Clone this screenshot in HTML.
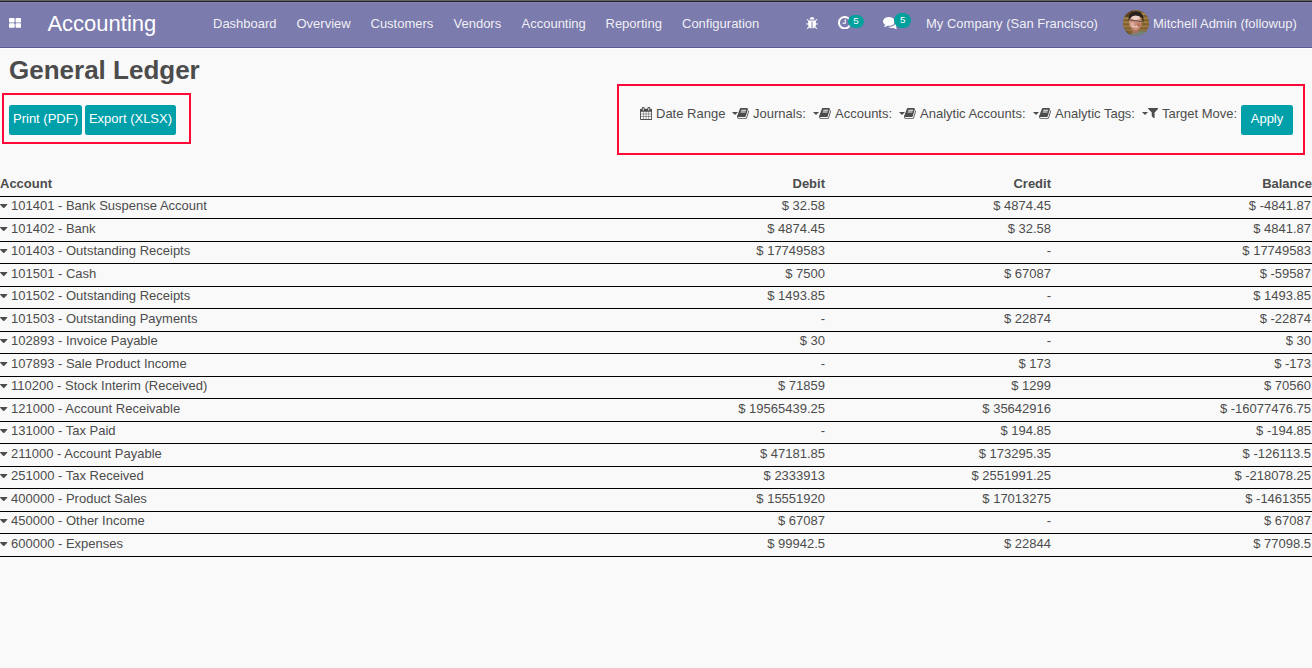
<!DOCTYPE html>
<html><head><meta charset="utf-8"><title>General Ledger</title>
<style>
*{box-sizing:border-box}
html,body{margin:0;padding:0}
body{width:1312px;height:668px;overflow:hidden;background:#f9f9f9;color:#4c4c4c;font-family:"Liberation Sans",sans-serif;font-size:13px;position:relative}
.ic{position:absolute;display:block}
.topline{position:absolute;left:0;top:0;width:1312px;height:2px;background:#222221;border-top:1px solid #636363}
.wl{position:absolute;left:0;top:48px;width:1312px;height:1px;background:#fff}
.nt{position:absolute;left:0;top:0;width:1312px;height:1px;background:#8582b8}
.nl{position:absolute;left:0;top:44px;width:1312px;height:1px;background:#817fb1}
.nav{position:absolute;left:0;top:2px;width:1312px;height:46px;background:#7c7bad;border-bottom:1px solid #5b5a95;color:rgba(255,255,255,.9)}
.nav span{position:absolute;white-space:nowrap;line-height:20px;top:12px}
.nav .brand{font-size:22px;left:47.4px;top:10px;line-height:24px;color:#fff}
.badge{position:absolute;background:#00a09d;color:#fff;font-size:9.75px;text-align:center;border-radius:8px}
.av{position:absolute;left:1123px;top:8px;width:26px;height:26px;border-radius:50%;overflow:hidden}
h1{position:absolute;margin:0;left:9px;top:54px;font-size:26px;line-height:32px;font-weight:bold;color:#4c4c4c;white-space:nowrap}
.box{position:absolute;border:2px solid #ff0838}
.btn{position:absolute;background:#00a0aa;color:#fff;border-radius:2.5px;height:30px;line-height:27px;text-align:center;white-space:nowrap;top:105px}
.flt{position:absolute;top:103px;line-height:21px;white-space:nowrap}
.bcar{position:absolute;top:112px;width:0;height:0;border-left:3.9px solid transparent;border-right:3.9px solid transparent;border-top:3.9px solid #4c4c4c}
.th{position:absolute;top:173px;line-height:21px;font-weight:bold;white-space:nowrap}
.hline{position:absolute;left:0;width:1312px;height:1px;background:#000;top:196px}
.row{position:absolute;left:0;width:1312px;border-bottom:1px solid #000;line-height:18px;white-space:nowrap;box-sizing:content-box}
.row span{position:absolute;top:0}
.row.o span{top:1px}
.row .a{left:11px}
.row .d{right:487px}
.row .c{right:261px}
.row .b{right:1px}
</style></head><body>
<div class="topline"></div><div class="wl"></div>
<div class="nav">
<div class="nt"></div><div class="nl"></div>
<svg class="ic" style="left:9.2px;top:16.2px" width="12.2" height="9.8" viewBox="64 128 1664 1408" preserveAspectRatio="none"><path fill="#fff" d="M832 1024v384q0 52-38 90t-90 38h-512q-52 0-90-38t-38-90v-384q0-52 38-90t90-38h512q52 0 90 38t38 90zm0-768v384q0 52-38 90t-90 38h-512q-52 0-90-38t-38-90v-384q0-52 38-90t90-38h512q52 0 90 38t38 90zm896 768v384q0 52-38 90t-90 38h-512q-52 0-90-38t-38-90v-384q0-52 38-90t90-38h512q52 0 90 38t38 90zm0-768v384q0 52-38 90t-90 38h-512q-52 0-90-38t-38-90v-384q0-52 38-90t90-38h512q52 0 90 38t38 90z"/></svg><svg class="ic" style="left:805.9px;top:14.6px" width="12.1" height="12.2" viewBox="96 64 1600 1568" preserveAspectRatio="none"><path fill="#fff" d="M1696 960q0 26-19 45t-45 19h-224q0 171-67 290l208 209q19 19 19 45t-19 45q-18 19-45 19t-45-19l-198-197q-5 5-15 13t-42 28.500-65 36.500-82 29-97 13v-896h-128v896q-51 0-101.500-13.500t-87-33-66-39-43.500-32.500l-15-14-183 207q-20 21-48 21-24 0-43-16-19-18-20.500-44.500t15.500-46.500l202-227q-58-114-58-274h-224q-26 0-45-19t-19-45 19-45 45-19h224v-294l-173-173q-19-19-19-45t19-45 45-19 45 19l173 173h844l173-173q19-19 45-19t45 19 19 45-19 45l-173 173v294h224q26 0 45 19t19 45zm-480-576h-640q0-133 93.500-226.500t226.500-93.500 226.500 93.500 93.500 226.500z"/></svg><svg class="ic" style="left:837.6px;top:13.6px" width="13.4" height="13.4" viewBox="128 128 1536 1536" preserveAspectRatio="none"><path fill="#fff" d="M1024 544v448q0 14-9 23t-23 9h-320q-14 0-23-9t-9-23v-64q0-14 9-23t23-9h224v-352q0-14 9-23t23-9h64q14 0 23 9t9 23zm416 352q0-148-73-273t-198-198-273-73-273 73-198 198-73 273 73 273 198 198 273 73 273-73 198-198 73-273zm224 0q0 209-103 385.500t-279.500 279.500-385.500 103-385.500-103-279.500-279.500-103-385.500 103-385.500 279.500-279.500 385.500-103 385.500 103 279.500 279.500 103 385.500z"/></svg><svg class="ic" style="left:883.2px;top:14.8px" width="15" height="12.2" viewBox="0 256 1792 1408.1" preserveAspectRatio="none"><path fill="#fff" d="M1408 768q0 139-94 257t-256.500 186.500-353.500 68.500q-86 0-176-16-124 88-278 128-36 9-86 16h-3q-11 0-20.500-8t-11.500-21q-1-3-1-6.500t.5-6.500 2-6l2.500-5 3.500-5.500 4-5 4.500-5 4-4.500q5-6 23-25t26-29.500 22.500-29 25-38.500 20.500-44q-124-72-195-177t-71-224q0-139 94-257t256.500-186.500 353.500-68.500 353.500 68.500 256.500 186.500 94 257zm384 256q0 120-71 224.500t-195 176.500q10 24 20.500 44t25 38.500 22.500 29 26 29.500 23 25q1 1 4 4.500t4.500 5 4 5 3.500 5.500l2.500 5 2 6 .5 6.500-1 6.500q-3 14-13 22t-22 7q-50-7-86-16-154-40-278-128-90 16-176 16-271 0-472-132 58 4 88 4 161 0 309-45t264-129q125-92 192-212t67-254q0-77-23-152 129 71 204 178t75 230z"/></svg>
<span class="brand">Accounting</span>
<span style="left:213px">Dashboard</span>
<span style="left:296.5px">Overview</span>
<span style="left:370.5px">Customers</span>
<span style="left:453.5px">Vendors</span>
<span style="left:521.5px">Accounting</span>
<span style="left:605.5px">Reporting</span>
<span style="left:682px">Configuration</span>
<div class="badge" style="left:848px;top:12.7px;width:16px;height:13.3px;line-height:12.5px">5</div>
<div class="badge" style="left:894.2px;top:10.7px;width:17px;height:15.3px;line-height:14.3px">5</div>
<span style="left:926px">My Company (San Francisco)</span>
<div class="av"><svg width="26" height="26" viewBox="0 0 26 26">
<defs><filter id="bl" x="-20%" y="-20%" width="140%" height="140%"><feGaussianBlur stdDeviation="0.7"/></filter></defs>
<rect width="26" height="26" fill="#80602f"/>
<g filter="url(#bl)">
<rect x="-2" y="-2" width="12" height="9" fill="#5a4526"/>
<rect x="-1" y="7.500" width="28" height="1.600" fill="#a58648"/><rect x="-1" y="11.500" width="28" height="1.600" fill="#a38345"/><rect x="-1" y="15.500" width="28" height="1.600" fill="#a07f42"/><rect x="-1" y="19.300" width="28" height="1.500" fill="#967540"/>
<rect x="18" y="3" width="9" height="2" fill="#a88848"/>
<path d="M-1 27V19q3 1 6 3l3 5z" fill="#5c4232"/>
<path d="M7 27q1-5 6-5.500l8-.3q3 1 3.500 6z" fill="#71837f"/>
<path d="M9.500 19h5.500l.5 3.500q-3 2-6.500 0z" fill="#a9705e"/>
<ellipse cx="12.300" cy="12.300" rx="6.300" ry="8" transform="rotate(-6 12.300 12.300)" fill="#c98f7b"/>
<ellipse cx="12.600" cy="7.600" rx="4.200" ry="2.300" fill="#ecd2c6"/>
<ellipse cx="9.300" cy="14.500" rx="2" ry="2.200" fill="#dcae9c"/>
<ellipse cx="15.800" cy="15" rx="1.800" ry="2" fill="#b9705f"/>
<path d="M5.600 10.500q-.8-8 6.500-9.300 7.800-.5 8.500 7.500l-.4 4.500-1-5q-2.500-2.800-7-2.600-4 .6-5.200 2.900z" fill="#2a221e"/>
<path d="M6.200 10l6 .6 6.800 1.200" stroke="#4a3a38" stroke-width=".8" fill="none"/>
<path d="M9.800 16.200q2.400 1.500 5 .3" stroke="#f3e4df" stroke-width="1" fill="none"/>
</g>
</svg></div>
<span style="left:1153px">Mitchell Admin (followup)</span>
</div>
<h1>General Ledger</h1>
<div class="box" style="left:2px;top:93px;width:189px;height:51px"></div>
<div class="btn" style="left:9px;width:73px">Print (PDF)</div>
<div class="btn" style="left:85px;width:91px">Export (XLSX)</div>
<div class="box" style="left:617px;top:84px;width:688px;height:71px"></div>
<div class="bcar" style="left:732px"></div>
<div class="bcar" style="left:813px"></div>
<div class="bcar" style="left:899px"></div>
<div class="bcar" style="left:1033px"></div>
<div class="bcar" style="left:1142.400px"></div>
<svg class="ic" style="left:640px;top:107px" width="12.1" height="13" viewBox="64 0 1664 1792" preserveAspectRatio="none"><path fill="#4c4c4c" d="M192 1664h288v-288h-288v288zm352 0h320v-288h-320v288zm-352-352h288v-320h-288v320zm352 0h320v-320h-320v320zm-352-384h288v-288h-288v288zm736 736h320v-288h-320v288zm-384-736h320v-288h-320v288zm768 736h288v-288h-288v288zm-384-352h320v-320h-320v320zm-352-864v-288q0-13-9.500-22.500t-22.500-9.500h-64q-13 0-22.500 9.500t-9.500 22.500v288q0 13 9.500 22.500t22.500 9.500h64q13 0 22.500-9.500t9.500-22.500zm736 864h288v-320h-288v320zm-384-384h320v-288h-320v288zm384 0h288v-288h-288v288zm32-480v-288q0-13-9.500-22.500t-22.500-9.500h-64q-13 0-22.500 9.500t-9.500 22.500v288q0 13 9.500 22.500t22.500 9.500h64q13 0 22.500-9.500t9.500-22.500zm384-64v1280q0 52-38 90t-90 38h-1408q-52 0-90-38t-38-90v-1280q0-52 38-90t90-38h128v-96q0-66 47-113t113-47h64q66 0 113 47t47 113v96h384v-96q0-66 47-113t113-47h64q66 0 113 47t47 113v96h128q52 0 90 38t38 90z"/></svg><svg class="ic" style="left:737.2px;top:108px" width="12.1" height="10.8" viewBox="63.48 128 1665.33 1536" preserveAspectRatio="none"><path fill="#4c4c4c" d="M1703 478q40 57 18 129l-275 906q-19 64-76.500 107.500t-122.500 43.500h-923q-77 0-148.500-53.500t-99.500-131.500q-24-67-2-127 0-4 3-27t4-37q1-8-3-21.500t-3-19.500q2-11 8-21t16.500-23.500 16.500-23.500q23-38 45-91.500t30-91.500q3-10 .500-30t-.500-28q3-11 17-28t17-23q21-36 42-92t25-90q1-9-2.500-32t.500-28q4-13 22-30.500t22-22.500q19-26 42.500-84.500t27.500-96.500q1-8-3-25.500t-2-26.500q2-8 9-18t18-23 17-21q8-12 16.500-30.500t15-35 16-36 19.500-32 26.500-23.500 36-11.500 47.500 5.500l-1 3q38-9 51-9h761q74 0 114 56t18 130l-274 906q-36 119-71.500 153.500t-128.500 34.500h-869q-27 0-38 15-11 16-1 43 24 70 144 70h923q29 0 56-15.500t35-41.500l300-987q7-22 5-57 38 15 59 43zm-1064 2q-4 13 2 22.500t20 9.500h608q13 0 25.500-9.500t16.500-22.500l21-64q4-13-2-22.500t-20-9.500h-608q-13 0-25.500 9.500t-16.500 22.500zm-83 256q-4 13 2 22.500t20 9.500h608q13 0 25.500-9.500t16.500-22.500l21-64q4-13-2-22.500t-20-9.500h-608q-13 0-25.500 9.500t-16.500 22.500z"/></svg><svg class="ic" style="left:818.9px;top:108px" width="12.1" height="10.8" viewBox="63.48 128 1665.33 1536" preserveAspectRatio="none"><path fill="#4c4c4c" d="M1703 478q40 57 18 129l-275 906q-19 64-76.500 107.500t-122.500 43.500h-923q-77 0-148.500-53.500t-99.500-131.500q-24-67-2-127 0-4 3-27t4-37q1-8-3-21.500t-3-19.500q2-11 8-21t16.500-23.500 16.500-23.500q23-38 45-91.500t30-91.500q3-10 .500-30t-.500-28q3-11 17-28t17-23q21-36 42-92t25-90q1-9-2.500-32t.500-28q4-13 22-30.500t22-22.500q19-26 42.500-84.500t27.500-96.500q1-8-3-25.500t-2-26.500q2-8 9-18t18-23 17-21q8-12 16.500-30.500t15-35 16-36 19.500-32 26.500-23.500 36-11.500 47.500 5.500l-1 3q38-9 51-9h761q74 0 114 56t18 130l-274 906q-36 119-71.500 153.500t-128.500 34.500h-869q-27 0-38 15-11 16-1 43 24 70 144 70h923q29 0 56-15.500t35-41.500l300-987q7-22 5-57 38 15 59 43zm-1064 2q-4 13 2 22.500t20 9.500h608q13 0 25.500-9.500t16.500-22.500l21-64q4-13-2-22.500t-20-9.500h-608q-13 0-25.500 9.500t-16.500 22.500zm-83 256q-4 13 2 22.500t20 9.500h608q13 0 25.500-9.500t16.500-22.500l21-64q4-13-2-22.500t-20-9.500h-608q-13 0-25.500 9.500t-16.500 22.500z"/></svg><svg class="ic" style="left:904.2px;top:108px" width="12.1" height="10.8" viewBox="63.48 128 1665.33 1536" preserveAspectRatio="none"><path fill="#4c4c4c" d="M1703 478q40 57 18 129l-275 906q-19 64-76.500 107.500t-122.500 43.500h-923q-77 0-148.500-53.500t-99.500-131.500q-24-67-2-127 0-4 3-27t4-37q1-8-3-21.500t-3-19.500q2-11 8-21t16.500-23.500 16.500-23.500q23-38 45-91.500t30-91.500q3-10 .500-30t-.500-28q3-11 17-28t17-23q21-36 42-92t25-90q1-9-2.500-32t.500-28q4-13 22-30.500t22-22.500q19-26 42.500-84.500t27.500-96.500q1-8-3-25.500t-2-26.500q2-8 9-18t18-23 17-21q8-12 16.500-30.500t15-35 16-36 19.500-32 26.500-23.500 36-11.500 47.500 5.500l-1 3q38-9 51-9h761q74 0 114 56t18 130l-274 906q-36 119-71.500 153.500t-128.500 34.500h-869q-27 0-38 15-11 16-1 43 24 70 144 70h923q29 0 56-15.500t35-41.500l300-987q7-22 5-57 38 15 59 43zm-1064 2q-4 13 2 22.500t20 9.500h608q13 0 25.500-9.500t16.500-22.500l21-64q4-13-2-22.500t-20-9.500h-608q-13 0-25.500 9.500t-16.500 22.500zm-83 256q-4 13 2 22.500t20 9.500h608q13 0 25.500-9.500t16.500-22.500l21-64q4-13-2-22.500t-20-9.500h-608q-13 0-25.500 9.500t-16.500 22.500z"/></svg><svg class="ic" style="left:1039.4px;top:108px" width="12.1" height="10.8" viewBox="63.48 128 1665.33 1536" preserveAspectRatio="none"><path fill="#4c4c4c" d="M1703 478q40 57 18 129l-275 906q-19 64-76.500 107.500t-122.500 43.500h-923q-77 0-148.500-53.500t-99.500-131.500q-24-67-2-127 0-4 3-27t4-37q1-8-3-21.500t-3-19.500q2-11 8-21t16.500-23.500 16.500-23.500q23-38 45-91.500t30-91.500q3-10 .500-30t-.500-28q3-11 17-28t17-23q21-36 42-92t25-90q1-9-2.500-32t.500-28q4-13 22-30.500t22-22.500q19-26 42.500-84.500t27.500-96.500q1-8-3-25.500t-2-26.500q2-8 9-18t18-23 17-21q8-12 16.500-30.500t15-35 16-36 19.500-32 26.500-23.500 36-11.500 47.500 5.500l-1 3q38-9 51-9h761q74 0 114 56t18 130l-274 906q-36 119-71.500 153.500t-128.500 34.500h-869q-27 0-38 15-11 16-1 43 24 70 144 70h923q29 0 56-15.500t35-41.500l300-987q7-22 5-57 38 15 59 43zm-1064 2q-4 13 2 22.500t20 9.500h608q13 0 25.500-9.500t16.500-22.500l21-64q4-13-2-22.500t-20-9.500h-608q-13 0-25.500 9.500t-16.500 22.500zm-83 256q-4 13 2 22.500t20 9.500h608q13 0 25.500-9.500t16.500-22.500l21-64q4-13-2-22.500t-20-9.500h-608q-13 0-25.500 9.500t-16.500 22.500z"/></svg><svg class="ic" style="left:1148px;top:108px" width="10.3" height="10.4" viewBox="190.98 256 1410.04 1408" preserveAspectRatio="none"><path fill="#4c4c4c" d="M1595 295q17 41-14 70l-493 493v742q0 42-39 59-13 5-25 5-27 0-45-19l-256-256q-19-19-19-45v-486l-493-493q-31-29-14-70 17-39 59-39h1280q42 0 59 39z"/></svg>
<div class="flt" style="left:656px">Date Range</div>
<div class="flt" style="left:753px">Journals:</div>
<div class="flt" style="left:835px">Accounts:</div>
<div class="flt" style="left:920px">Analytic Accounts:</div>
<div class="flt" style="left:1055px">Analytic Tags:</div>
<div class="flt" style="left:1162px">Target Move:</div>
<div class="btn" style="left:1241px;width:52px">Apply</div>
<div class="th" style="left:0">Account</div>
<div class="th" style="right:487px">Debit</div>
<div class="th" style="right:261px">Credit</div>
<div class="th" style="right:0">Balance</div>
<div class="hline"></div>
<div class="row" style="top:197px;height:21px"><svg class="ic" style="left:0.2px;top:6.8px" width="7.4" height="4.2" viewBox="384 640 1024 576" preserveAspectRatio="none"><path fill="#4c4c4c" d="M1408 704q0 26-19 45l-448 448q-19 19-45 19t-45-19l-448-448q-19-19-19-45t19-45 45-19h896q26 0 45 19t19 45z"/></svg><span class="a">101401 - Bank Suspense Account</span><span class="d">$ 32.58</span><span class="c">$ 4874.45</span><span class="b">$ -4841.87</span></div>
<div class="row o" style="top:219px;height:22px"><svg class="ic" style="left:0.2px;top:7.8px" width="7.4" height="4.2" viewBox="384 640 1024 576" preserveAspectRatio="none"><path fill="#4c4c4c" d="M1408 704q0 26-19 45l-448 448q-19 19-45 19t-45-19l-448-448q-19-19-19-45t19-45 45-19h896q26 0 45 19t19 45z"/></svg><span class="a">101402 - Bank</span><span class="d">$ 4874.45</span><span class="c">$ 32.58</span><span class="b">$ 4841.87</span></div>
<div class="row" style="top:242px;height:21px"><svg class="ic" style="left:0.2px;top:6.8px" width="7.4" height="4.2" viewBox="384 640 1024 576" preserveAspectRatio="none"><path fill="#4c4c4c" d="M1408 704q0 26-19 45l-448 448q-19 19-45 19t-45-19l-448-448q-19-19-19-45t19-45 45-19h896q26 0 45 19t19 45z"/></svg><span class="a">101403 - Outstanding Receipts</span><span class="d">$ 17749583</span><span class="c">-</span><span class="b">$ 17749583</span></div>
<div class="row o" style="top:264px;height:22px"><svg class="ic" style="left:0.2px;top:7.8px" width="7.4" height="4.2" viewBox="384 640 1024 576" preserveAspectRatio="none"><path fill="#4c4c4c" d="M1408 704q0 26-19 45l-448 448q-19 19-45 19t-45-19l-448-448q-19-19-19-45t19-45 45-19h896q26 0 45 19t19 45z"/></svg><span class="a">101501 - Cash</span><span class="d">$ 7500</span><span class="c">$ 67087</span><span class="b">$ -59587</span></div>
<div class="row" style="top:287px;height:21px"><svg class="ic" style="left:0.2px;top:6.8px" width="7.4" height="4.2" viewBox="384 640 1024 576" preserveAspectRatio="none"><path fill="#4c4c4c" d="M1408 704q0 26-19 45l-448 448q-19 19-45 19t-45-19l-448-448q-19-19-19-45t19-45 45-19h896q26 0 45 19t19 45z"/></svg><span class="a">101502 - Outstanding Receipts</span><span class="d">$ 1493.85</span><span class="c">-</span><span class="b">$ 1493.85</span></div>
<div class="row o" style="top:309px;height:22px"><svg class="ic" style="left:0.2px;top:7.8px" width="7.4" height="4.2" viewBox="384 640 1024 576" preserveAspectRatio="none"><path fill="#4c4c4c" d="M1408 704q0 26-19 45l-448 448q-19 19-45 19t-45-19l-448-448q-19-19-19-45t19-45 45-19h896q26 0 45 19t19 45z"/></svg><span class="a">101503 - Outstanding Payments</span><span class="d">-</span><span class="c">$ 22874</span><span class="b">$ -22874</span></div>
<div class="row" style="top:332px;height:21px"><svg class="ic" style="left:0.2px;top:6.8px" width="7.4" height="4.2" viewBox="384 640 1024 576" preserveAspectRatio="none"><path fill="#4c4c4c" d="M1408 704q0 26-19 45l-448 448q-19 19-45 19t-45-19l-448-448q-19-19-19-45t19-45 45-19h896q26 0 45 19t19 45z"/></svg><span class="a">102893 - Invoice Payable</span><span class="d">$ 30</span><span class="c">-</span><span class="b">$ 30</span></div>
<div class="row o" style="top:354px;height:22px"><svg class="ic" style="left:0.2px;top:7.8px" width="7.4" height="4.2" viewBox="384 640 1024 576" preserveAspectRatio="none"><path fill="#4c4c4c" d="M1408 704q0 26-19 45l-448 448q-19 19-45 19t-45-19l-448-448q-19-19-19-45t19-45 45-19h896q26 0 45 19t19 45z"/></svg><span class="a">107893 - Sale Product Income</span><span class="d">-</span><span class="c">$ 173</span><span class="b">$ -173</span></div>
<div class="row" style="top:377px;height:21px"><svg class="ic" style="left:0.2px;top:6.8px" width="7.4" height="4.2" viewBox="384 640 1024 576" preserveAspectRatio="none"><path fill="#4c4c4c" d="M1408 704q0 26-19 45l-448 448q-19 19-45 19t-45-19l-448-448q-19-19-19-45t19-45 45-19h896q26 0 45 19t19 45z"/></svg><span class="a">110200 - Stock Interim (Received)</span><span class="d">$ 71859</span><span class="c">$ 1299</span><span class="b">$ 70560</span></div>
<div class="row o" style="top:399px;height:22px"><svg class="ic" style="left:0.2px;top:7.8px" width="7.4" height="4.2" viewBox="384 640 1024 576" preserveAspectRatio="none"><path fill="#4c4c4c" d="M1408 704q0 26-19 45l-448 448q-19 19-45 19t-45-19l-448-448q-19-19-19-45t19-45 45-19h896q26 0 45 19t19 45z"/></svg><span class="a">121000 - Account Receivable</span><span class="d">$ 19565439.25</span><span class="c">$ 35642916</span><span class="b">$ -16077476.75</span></div>
<div class="row" style="top:422px;height:21px"><svg class="ic" style="left:0.2px;top:6.8px" width="7.4" height="4.2" viewBox="384 640 1024 576" preserveAspectRatio="none"><path fill="#4c4c4c" d="M1408 704q0 26-19 45l-448 448q-19 19-45 19t-45-19l-448-448q-19-19-19-45t19-45 45-19h896q26 0 45 19t19 45z"/></svg><span class="a">131000 - Tax Paid</span><span class="d">-</span><span class="c">$ 194.85</span><span class="b">$ -194.85</span></div>
<div class="row o" style="top:444px;height:22px"><svg class="ic" style="left:0.2px;top:7.8px" width="7.4" height="4.2" viewBox="384 640 1024 576" preserveAspectRatio="none"><path fill="#4c4c4c" d="M1408 704q0 26-19 45l-448 448q-19 19-45 19t-45-19l-448-448q-19-19-19-45t19-45 45-19h896q26 0 45 19t19 45z"/></svg><span class="a">211000 - Account Payable</span><span class="d">$ 47181.85</span><span class="c">$ 173295.35</span><span class="b">$ -126113.5</span></div>
<div class="row" style="top:467px;height:21px"><svg class="ic" style="left:0.2px;top:6.8px" width="7.4" height="4.2" viewBox="384 640 1024 576" preserveAspectRatio="none"><path fill="#4c4c4c" d="M1408 704q0 26-19 45l-448 448q-19 19-45 19t-45-19l-448-448q-19-19-19-45t19-45 45-19h896q26 0 45 19t19 45z"/></svg><span class="a">251000 - Tax Received</span><span class="d">$ 2333913</span><span class="c">$ 2551991.25</span><span class="b">$ -218078.25</span></div>
<div class="row o" style="top:489px;height:22px"><svg class="ic" style="left:0.2px;top:7.8px" width="7.4" height="4.2" viewBox="384 640 1024 576" preserveAspectRatio="none"><path fill="#4c4c4c" d="M1408 704q0 26-19 45l-448 448q-19 19-45 19t-45-19l-448-448q-19-19-19-45t19-45 45-19h896q26 0 45 19t19 45z"/></svg><span class="a">400000 - Product Sales</span><span class="d">$ 15551920</span><span class="c">$ 17013275</span><span class="b">$ -1461355</span></div>
<div class="row" style="top:512px;height:21px"><svg class="ic" style="left:0.2px;top:6.8px" width="7.4" height="4.2" viewBox="384 640 1024 576" preserveAspectRatio="none"><path fill="#4c4c4c" d="M1408 704q0 26-19 45l-448 448q-19 19-45 19t-45-19l-448-448q-19-19-19-45t19-45 45-19h896q26 0 45 19t19 45z"/></svg><span class="a">450000 - Other Income</span><span class="d">$ 67087</span><span class="c">-</span><span class="b">$ 67087</span></div>
<div class="row o" style="top:534px;height:22px"><svg class="ic" style="left:0.2px;top:7.8px" width="7.4" height="4.2" viewBox="384 640 1024 576" preserveAspectRatio="none"><path fill="#4c4c4c" d="M1408 704q0 26-19 45l-448 448q-19 19-45 19t-45-19l-448-448q-19-19-19-45t19-45 45-19h896q26 0 45 19t19 45z"/></svg><span class="a">600000 - Expenses</span><span class="d">$ 99942.5</span><span class="c">$ 22844</span><span class="b">$ 77098.5</span></div>
</body></html>
